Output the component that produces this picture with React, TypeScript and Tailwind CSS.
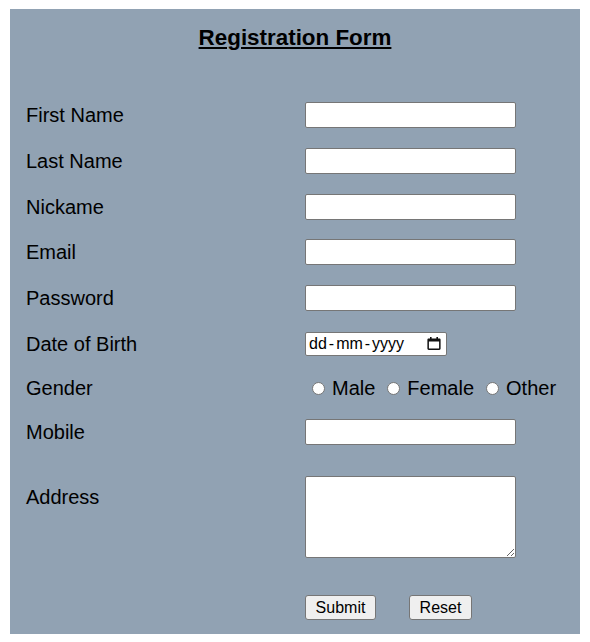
import React from "react";

const FIELD_CLASS =
  "box-border h-[26px] w-[211px] rounded-[2px] border border-solid border-[#767676] bg-white px-[2px] text-[13px] outline-none";

const LABEL_CLASS = "w-[295px] shrink-0 pl-[16px]";

const ROWS: { label: string; type: string; height: string }[] = [
  { label: "First Name", type: "text", height: "h-[46px]" },
  { label: "Last Name", type: "text", height: "h-[46px]" },
  { label: "Nickame", type: "text", height: "h-[45px]" },
  { label: "Email", type: "email", height: "h-[46px]" },
  { label: "Password", type: "password", height: "h-[46px]" },
];

function CalendarIcon() {
  return (
    <svg width="14" height="13" viewBox="0 0 14 13" aria-hidden>
      <path
        d="M3 0h1.6v1.4h4.8V0H11v1.4h1.2c.9 0 1.4.5 1.4 1.4v8.8c0 .9-.5 1.4-1.4 1.4H1.8c-.9 0-1.4-.5-1.4-1.4V2.8c0-.9.5-1.4 1.4-1.4H3V0zm-1.1 4.6v6.9h10.2V4.6H1.9z"
        fill="#111"
      />
    </svg>
  );
}

function DateField() {
  return (
    <div className="box-border flex h-[24px] w-[142px] items-center rounded-[2px] border border-solid border-[#767676] bg-white pl-[3px] pr-[5px] text-[16px] leading-none text-black">
      <span>dd</span>
      <span className="mx-[2px]">-</span>
      <span>mm</span>
      <span className="mx-[2px]">-</span>
      <span>yyyy</span>
      <span className="ml-auto flex">
        <CalendarIcon />
      </span>
    </div>
  );
}

function Radio({ label, first }: { label: string; first?: boolean }) {
  return (
    <label className={`flex items-center ${first ? "ml-[7px]" : "ml-[12px]"}`}>
      <span className="box-border h-[13px] w-[13px] rounded-full border border-solid border-[#767676] bg-white" />
      <span className="ml-[7px]">{label}</span>
    </label>
  );
}

export default function App() {
  return (
    <div className="min-h-[642px] bg-white pl-[10px] pt-[9px] font-['Liberation_Sans',Arial,sans-serif] text-black">
      <form className="box-border flex h-[625px] w-[570px] flex-col bg-[#91a2b3]">
        <h2 className="mt-[16px] h-[26px] text-center text-[22.4px] font-bold leading-[26px] underline">
          Registration Form
        </h2>

        <div className="mt-[41px] flex flex-col text-[20px]">
          {ROWS.map((row) => (
            <div key={row.label} className={`flex items-center ${row.height}`}>
              <span className={LABEL_CLASS}>{row.label}</span>
              <input type={row.type} className={FIELD_CLASS} />
            </div>
          ))}

          <div className="flex h-[45px] items-center">
            <span className={LABEL_CLASS}>Date of Birth</span>
            <DateField />
          </div>

          <div className="flex h-[44px] items-center">
            <span className={LABEL_CLASS}>Gender</span>
            <Radio label="Male" first />
            <Radio label="Female" />
            <Radio label="Other" />
          </div>

          <div className="flex h-[44px] items-center">
            <span className={LABEL_CLASS}>Mobile</span>
            <input type="tel" className={FIELD_CLASS} />
          </div>

          <div className="mt-[22px] flex items-start">
            <span className={`${LABEL_CLASS} pt-[6px]`}>Address</span>
            <textarea className="box-border h-[82px] w-[211px] resize rounded-[2px] border border-solid border-[#767676] bg-white text-[13px] outline-none" />
          </div>

          <div className="mt-[37px] flex items-center pl-[295px] text-[16px]">
            <button
              type="button"
              className="box-border h-[25px] w-[71px] rounded-[3px] border border-solid border-[#767676] bg-[#efefef] leading-none"
            >
              Submit
            </button>
            <button
              type="button"
              className="ml-[33px] box-border h-[25px] w-[63px] rounded-[3px] border border-solid border-[#767676] bg-[#efefef] leading-none"
            >
              Reset
            </button>
          </div>
        </div>
      </form>
    </div>
  );
}
